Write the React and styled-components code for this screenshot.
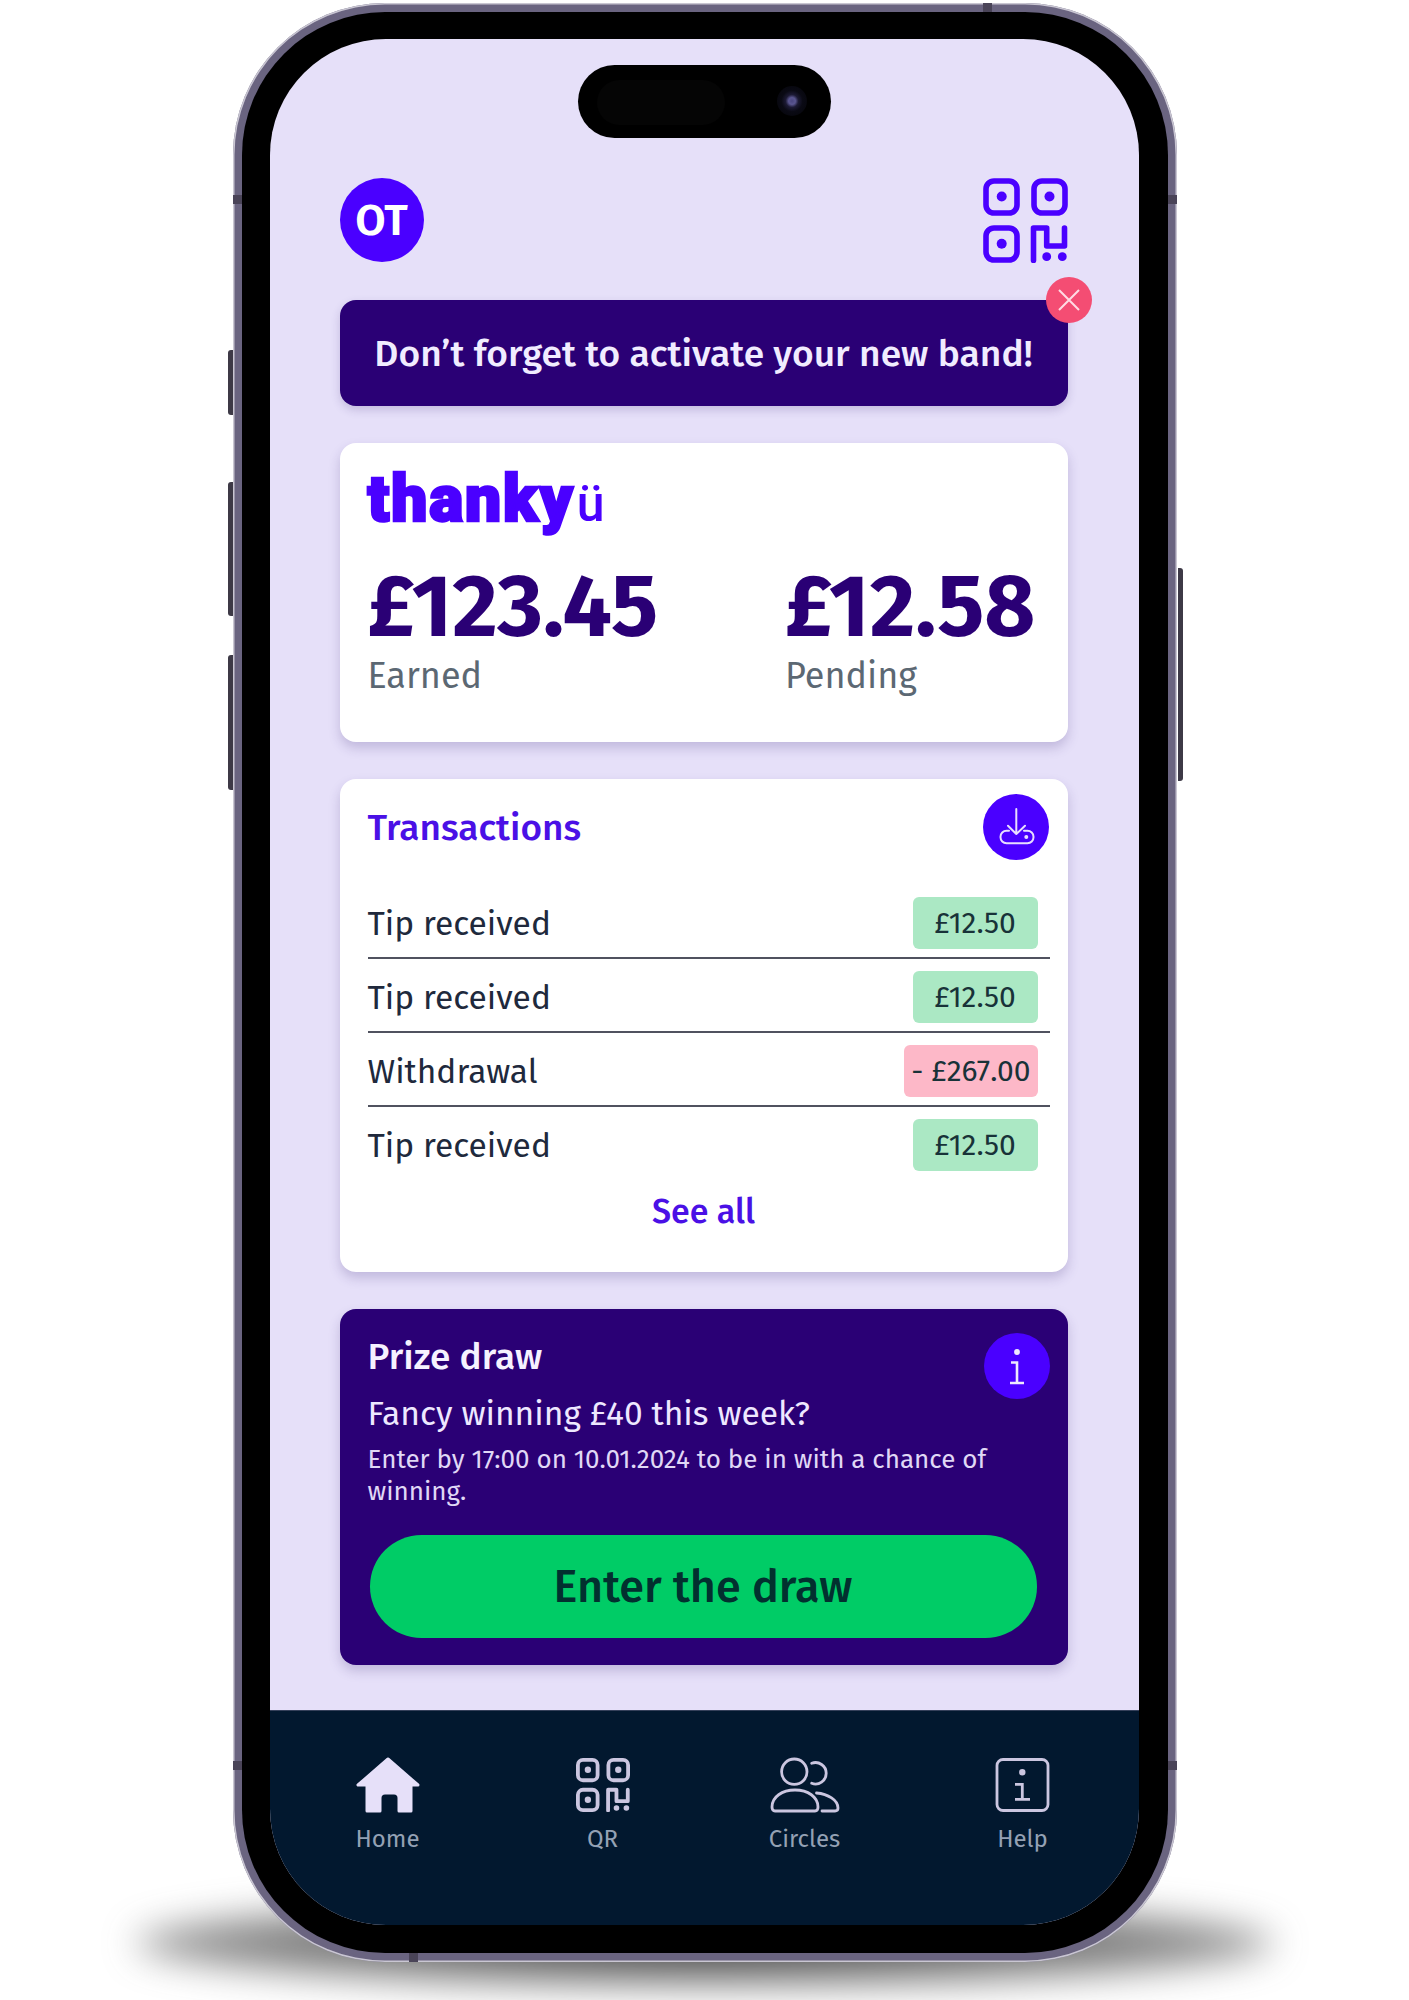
import React from 'react'
import styled, { createGlobalStyle } from 'styled-components'

const GlobalStyle = createGlobalStyle`
  html, body {
    margin: 0;
    padding: 0;
    background: #fff;
  }
  body {
    font-family: 'Fira Sans', 'Roboto', 'Noto Sans', sans-serif;
    height: 2000px;
    overflow: hidden;
  }
`

const Page = styled.div`
  position: relative;
  display: flex;
  justify-content: center;
  padding-top: 3px;
  height: 1997px;
`

const FloorShadow = styled.div`
  position: absolute;
  left: 135px;
  top: 1900px;
  width: 1140px;
  height: 86px;
  border-radius: 50%;
  background: radial-gradient(ellipse at center, rgba(30, 30, 30, 0.85) 0%, rgba(60, 60, 60, 0.55) 66%, rgba(130, 130, 130, 0.2) 84%, rgba(255, 255, 255, 0) 100%);
  filter: blur(18px);
`

const Phone = styled.div`
  position: relative;
  width: 944px;
  height: 1959px;
  box-sizing: border-box;
  padding: 9px;
  border-radius: 152px;
  background: #6a6480;
  box-shadow: inset 0 0 0 1.5px #c9c6d2;
`

const SideKey = styled.div`
  position: absolute;
  top: ${p => p.$top}px;
  height: ${p => p.$height}px;
  width: 5px;
  background: #3d3946;
  ${p => (p.$right ? 'right: -6px; border-radius: 0 3px 3px 0;' : 'left: -5px; border-radius: 3px 0 0 3px;')}
`

const Band = styled.div`
  position: absolute;
  background: #4a4458;
  ${p => p.$css}
`

const Bezel = styled.div`
  height: 100%;
  box-sizing: border-box;
  padding: 27px 29px 28px 28px;
  border-radius: 143px;
  background: #000;
`

const Screen = styled.div`
  position: relative;
  height: 100%;
  display: flex;
  flex-direction: column;
  overflow: hidden;
  border-radius: 116px;
  background: #e6e0f9;
`

const Island = styled.div`
  position: absolute;
  top: 26px;
  left: 308px;
  width: 253px;
  height: 73px;
  border-radius: 37px;
  background: #000;
`

const IslandPill = styled.div`
  position: absolute;
  left: 19px;
  top: 15px;
  width: 128px;
  height: 45px;
  border-radius: 23px;
  background: #050505;
`

const Lens = styled.div`
  position: absolute;
  right: 24px;
  top: 21px;
  width: 30px;
  height: 30px;
  border-radius: 50%;
  background: radial-gradient(circle, #4a4680 0%, #5a5690 16%, #1c1a34 30%, #0a0a14 50%, #040408 100%);
`

const Content = styled.div`
  flex: 1;
  display: flex;
  flex-direction: column;
  gap: 37px;
  padding: 138px 71px 0 70px;
`

const TopBar = styled.div`
  display: flex;
  align-items: center;
  justify-content: space-between;
  height: 86px;
`

const QrSlot = styled.span`
  display: flex;
  color: #4a00ff;
`

const Avatar = styled.div`
  width: 84px;
  height: 84px;
  display: flex;
  align-items: center;
  justify-content: center;
  border-radius: 50%;
  background: #4a00ff;
  color: #fff;
  font-size: 44px;
  font-weight: 600;
`

const Notice = styled.div`
  position: relative;
  height: 106px;
  display: flex;
  align-items: center;
  justify-content: center;
  border-radius: 16px;
  background: #2a0075;
  color: #f1ecff;
  font-size: 37.2px;
  font-weight: 500;
  box-shadow: 0 4px 10px rgba(60, 40, 120, 0.2);
`

const CloseButton = styled.div`
  position: absolute;
  top: -23px;
  right: -24px;
  width: 46px;
  height: 46px;
  display: flex;
  align-items: center;
  justify-content: center;
  border-radius: 50%;
  background: #f44d73;
`

const Card = styled.section`
  box-sizing: border-box;
  height: ${p => p.$height}px;
  border-radius: 16px;
  background: ${p => (p.$dark ? '#2a0075' : '#fff')};
  box-shadow: 0 6px 12px rgba(60, 40, 120, 0.22);
`

const BalanceCard = styled(Card)`
  padding: 26px 32px 0 28px;
`

const Logo = styled.div`
  height: 64px;
  display: flex;
  align-items: baseline;
  color: #4a00ff;
  font-family: 'Roboto', sans-serif;
  font-size: 64px;
  font-weight: 900;
  line-height: 62px;
  letter-spacing: 1.8px;
  -webkit-text-stroke: 2.6px #4a00ff;
`

const LogoTail = styled.span`
  margin-left: 2px;
  font-size: 50px;
  font-weight: 500;
  letter-spacing: 0;
  -webkit-text-stroke: 0;
`

const Balances = styled.div`
  display: flex;
  justify-content: space-between;
  margin-top: 29px;
`

const Balance = styled.div`
  display: flex;
  flex-direction: column;
`

const Amount = styled.div`
  color: #2a0075;
  font-size: 88px;
  font-weight: 700;
  line-height: 90px;
`

const AmountLabel = styled.div`
  color: #5c6873;
  font-size: 36px;
  line-height: 48px;
`

const TransactionsCard = styled(Card)`
  padding: 15px 18px 0 28px;
`

const CardHead = styled.div`
  display: flex;
  align-items: center;
  justify-content: space-between;
  height: 66px;
  padding-right: 1px;
`

const CardTitle = styled.h2`
  margin: 0;
  color: ${p => (p.$light ? '#f6f2ff' : '#4a10e6')};
  font-size: 37px;
  font-weight: 500;
`

const RoundIcon = styled.div`
  width: 66px;
  height: 66px;
  margin-top: ${p => p.$offset || 0}px;
  display: flex;
  align-items: center;
  justify-content: center;
  flex: none;
  border-radius: 50%;
  background: #4a00ff;
`

const Rows = styled.div`
  margin-top: 25px;
`

const Row = styled.div`
  display: flex;
  align-items: flex-start;
  justify-content: space-between;
  box-sizing: border-box;
  height: 74px;
  padding: 12px 12px 0 0;
  border-bottom: ${p => (p.$last ? 'none' : '2.5px solid #50525f')};
`

const RowLabel = styled.span`
  color: #20293c;
  font-size: 33.5px;
  line-height: 54px;
`

const Chip = styled.span`
  height: 52px;
  display: flex;
  align-items: center;
  justify-content: center;
  box-sizing: border-box;
  min-width: 125px;
  padding: 0 7px;
  border-radius: 6px;
  background: ${p => (p.$negative ? '#fdb8c8' : '#abe8c4')};
  color: #183238;
  font-size: 30px;
`

const SeeAll = styled.div`
  margin-top: 10px;
  padding-right: 10px;
  text-align: center;
  color: #4a10e6;
  font-size: 34px;
  font-weight: 500;
`

const PrizeCard = styled(Card)`
  padding: 20px 18px 0 28px;
`

const PrizeHead = styled.div`
  display: flex;
  align-items: flex-start;
  justify-content: space-between;
  height: 66px;
`

const PrizeTitle = styled(CardTitle)`
  line-height: 56px;
`

const PrizeLead = styled.div`
  margin-top: -3px;
  color: #eee8ff;
  font-size: 33.6px;
  line-height: 44px;
`

const PrizeText = styled.div`
  margin-top: 8px;
  width: 640px;
  color: #e0d8f6;
  font-size: 26px;
  line-height: 32px;
`

const EnterButton = styled.div`
  width: 667px;
  height: 103px;
  margin: 27px 0 0 2px;
  display: flex;
  align-items: center;
  justify-content: center;
  border-radius: 52px;
  background: #00cc66;
  color: #02302f;
  font-size: 45px;
  font-weight: 500;
`

const BottomNav = styled.nav`
  height: 215px;
  display: flex;
  align-items: flex-start;
  box-sizing: border-box;
  padding: 46px 0 0 58px;
  background: #02182f;
  border-top: 1px solid #35405a;
`

const NavItem = styled.div`
  width: 120px;
  margin-left: ${p => p.$gap}px;
  display: flex;
  flex-direction: column;
  align-items: center;
  color: #94a1b4;
  font-size: 24px;
`

const NavIcon = styled.div`
  height: 56px;
  display: flex;
  align-items: center;
  color: ${p => (p.$solid ? '#e6e0f9' : '#cbc6e0')};
`

const NavLabel = styled.span`
  margin-top: 11px;
  line-height: 30px;
`

const QrIcon = ({ size, weight = 5.6 }) => (
  <svg width={size} height={size} viewBox="0 0 85 85" fill="none" stroke="currentColor" strokeWidth={weight} strokeLinecap="round" strokeLinejoin="round">
    <rect x="3" y="3" width="31" height="32" rx="8" />
    <rect x="51" y="3" width="31" height="32" rx="8" />
    <rect x="3" y="50" width="31" height="32" rx="8" />
    <path d="M50.5 82.5V50H63.7V68H81.5V50" />
    <g fill="currentColor" stroke="none">
      <circle cx="18.7" cy="18.5" r="5" />
      <circle cx="66.5" cy="18.5" r="5" />
      <circle cx="18.7" cy="65.7" r="5" />
      <circle cx="63.7" cy="78.7" r="4.4" />
      <circle cx="79.3" cy="78.7" r="4.4" />
    </g>
  </svg>
)

const CloseIcon = () => (
  <svg width="24" height="24" viewBox="0 0 24 24" fill="none" stroke="#ffdbe3" strokeWidth="2">
    <path d="M2 2L22 22M22 2L2 22" />
  </svg>
)

const DownloadIcon = () => (
  <svg width="66" height="66" viewBox="0 0 66 66" fill="none" stroke="#e8deff" strokeWidth="2" strokeLinecap="round" strokeLinejoin="round">
    <path d="M33.3 15V40M25 31.7L33.3 40L42 31.7" />
    <path d="M26 36.7H23.5a6 6 0 0 0-6 6v.6a6 6 0 0 0 6 6h21a6 6 0 0 0 6-6v-.6a6 6 0 0 0-6-6H41" />
    <circle cx="43.3" cy="43" r="1" />
  </svg>
)

const InfoIcon = () => (
  <svg width="66" height="66" viewBox="0 0 66 66" fill="none" stroke="#eee8ff" strokeWidth="2.6">
    <circle cx="33" cy="19" r="1.6" fill="#eee8ff" />
    <path d="M27 29.5H33V50M26 50H40" />
  </svg>
)

const HomeIcon = () => (
  <svg width="64" height="56" viewBox="0 0 64 56" fill="currentColor" stroke="currentColor" strokeWidth="3" strokeLinejoin="round">
    <path d="M32 2L2 28H11V54H24V41Q24 36 29 36H38Q43 36 43 41V54H55V28H62Z" />
  </svg>
)

const CirclesIcon = () => (
  <svg width="70" height="56" viewBox="0 0 70 56" fill="none" stroke="currentColor" strokeWidth="2.8" strokeLinecap="round">
    <circle cx="24.3" cy="14.7" r="12.7" />
    <path d="M41.7 6.3A10.7 10.7 0 1 1 41.7 26.3" />
    <path d="M2 50C2 40 12 33 25 33C38 33 48 40 48 50Q48 54 45 54H5Q2 54 2 50Z" />
    <path d="M46.5 36C58 37 68 43 68 51Q68 54 65 54H52" />
  </svg>
)

const HelpIcon = () => (
  <svg width="57" height="56" viewBox="0 0 57 56" fill="none" stroke="currentColor" strokeWidth="2.8">
    <rect x="3" y="2.5" width="51" height="51" rx="6" />
    <circle cx="28.3" cy="15.3" r="1.8" fill="currentColor" />
    <path d="M21 27.3H28.3V42.3M21 42.3H36" />
  </svg>
)

const transactions = [
  { label: 'Tip received', amount: '£12.50' },
  { label: 'Tip received', amount: '£12.50' },
  { label: 'Withdrawal', amount: '- £267.00', negative: true },
  { label: 'Tip received', amount: '£12.50' },
]

const navItems = [
  { label: 'Home', icon: <HomeIcon />, gap: 0, solid: true },
  { label: 'QR', icon: <QrIcon size={54} weight={6} />, gap: 95 },
  { label: 'Circles', icon: <CirclesIcon />, gap: 82 },
  { label: 'Help', icon: <HelpIcon />, gap: 98 },
]

const App = () => (
  <Page>
    <GlobalStyle />
    <FloorShadow />
    <Phone>
      <SideKey $top={347} $height={65} />
      <SideKey $top={479} $height={134} />
      <SideKey $top={652} $height={135} />
      <SideKey $right $top={565} $height={213} />
      <Band $css="left: 0; top: 192px; width: 9px; height: 9px;" />
      <Band $css="right: 0; top: 192px; width: 9px; height: 9px;" />
      <Band $css="left: 0; bottom: 192px; width: 9px; height: 9px;" />
      <Band $css="right: 0; bottom: 192px; width: 9px; height: 9px;" />
      <Band $css="left: 176px; bottom: 0; width: 9px; height: 9px;" />
      <Band $css="right: 185px; top: 0; width: 9px; height: 9px;" />
      <Bezel>
        <Screen>
          <Island>
            <IslandPill />
            <Lens />
          </Island>
          <Content>
            <TopBar>
              <Avatar>OT</Avatar>
              <QrSlot>
                <QrIcon size={85} />
              </QrSlot>
            </TopBar>
            <Notice>
              Don’t forget to activate your new band!
              <CloseButton>
                <CloseIcon />
              </CloseButton>
            </Notice>
            <BalanceCard $height={299}>
              <Logo>
                thanky<LogoTail>ü</LogoTail>
              </Logo>
              <Balances>
                <Balance>
                  <Amount>£123.45</Amount>
                  <AmountLabel>Earned</AmountLabel>
                </Balance>
                <Balance>
                  <Amount>£12.58</Amount>
                  <AmountLabel>Pending</AmountLabel>
                </Balance>
              </Balances>
            </BalanceCard>
            <TransactionsCard $height={493}>
              <CardHead>
                <CardTitle>Transactions</CardTitle>
                <RoundIcon>
                  <DownloadIcon />
                </RoundIcon>
              </CardHead>
              <Rows>
                {transactions.map((tx, i) => (
                  <Row key={i} $last={i === transactions.length - 1}>
                    <RowLabel>{tx.label}</RowLabel>
                    <Chip $negative={tx.negative}>{tx.amount}</Chip>
                  </Row>
                ))}
              </Rows>
              <SeeAll>See all</SeeAll>
            </TransactionsCard>
            <PrizeCard $height={356} $dark>
              <PrizeHead>
                <PrizeTitle $light>Prize draw</PrizeTitle>
                <RoundIcon $offset={4}>
                  <InfoIcon />
                </RoundIcon>
              </PrizeHead>
              <PrizeLead>Fancy winning £40 this week?</PrizeLead>
              <PrizeText>Enter by 17:00 on 10.01.2024 to be in with a chance of winning.</PrizeText>
              <EnterButton>Enter the draw</EnterButton>
            </PrizeCard>
          </Content>
          <BottomNav>
            {navItems.map(item => (
              <NavItem key={item.label} $gap={item.gap}>
                <NavIcon $solid={item.solid}>{item.icon}</NavIcon>
                <NavLabel>{item.label}</NavLabel>
              </NavItem>
            ))}
          </BottomNav>
        </Screen>
      </Bezel>
    </Phone>
  </Page>
)

export default App
